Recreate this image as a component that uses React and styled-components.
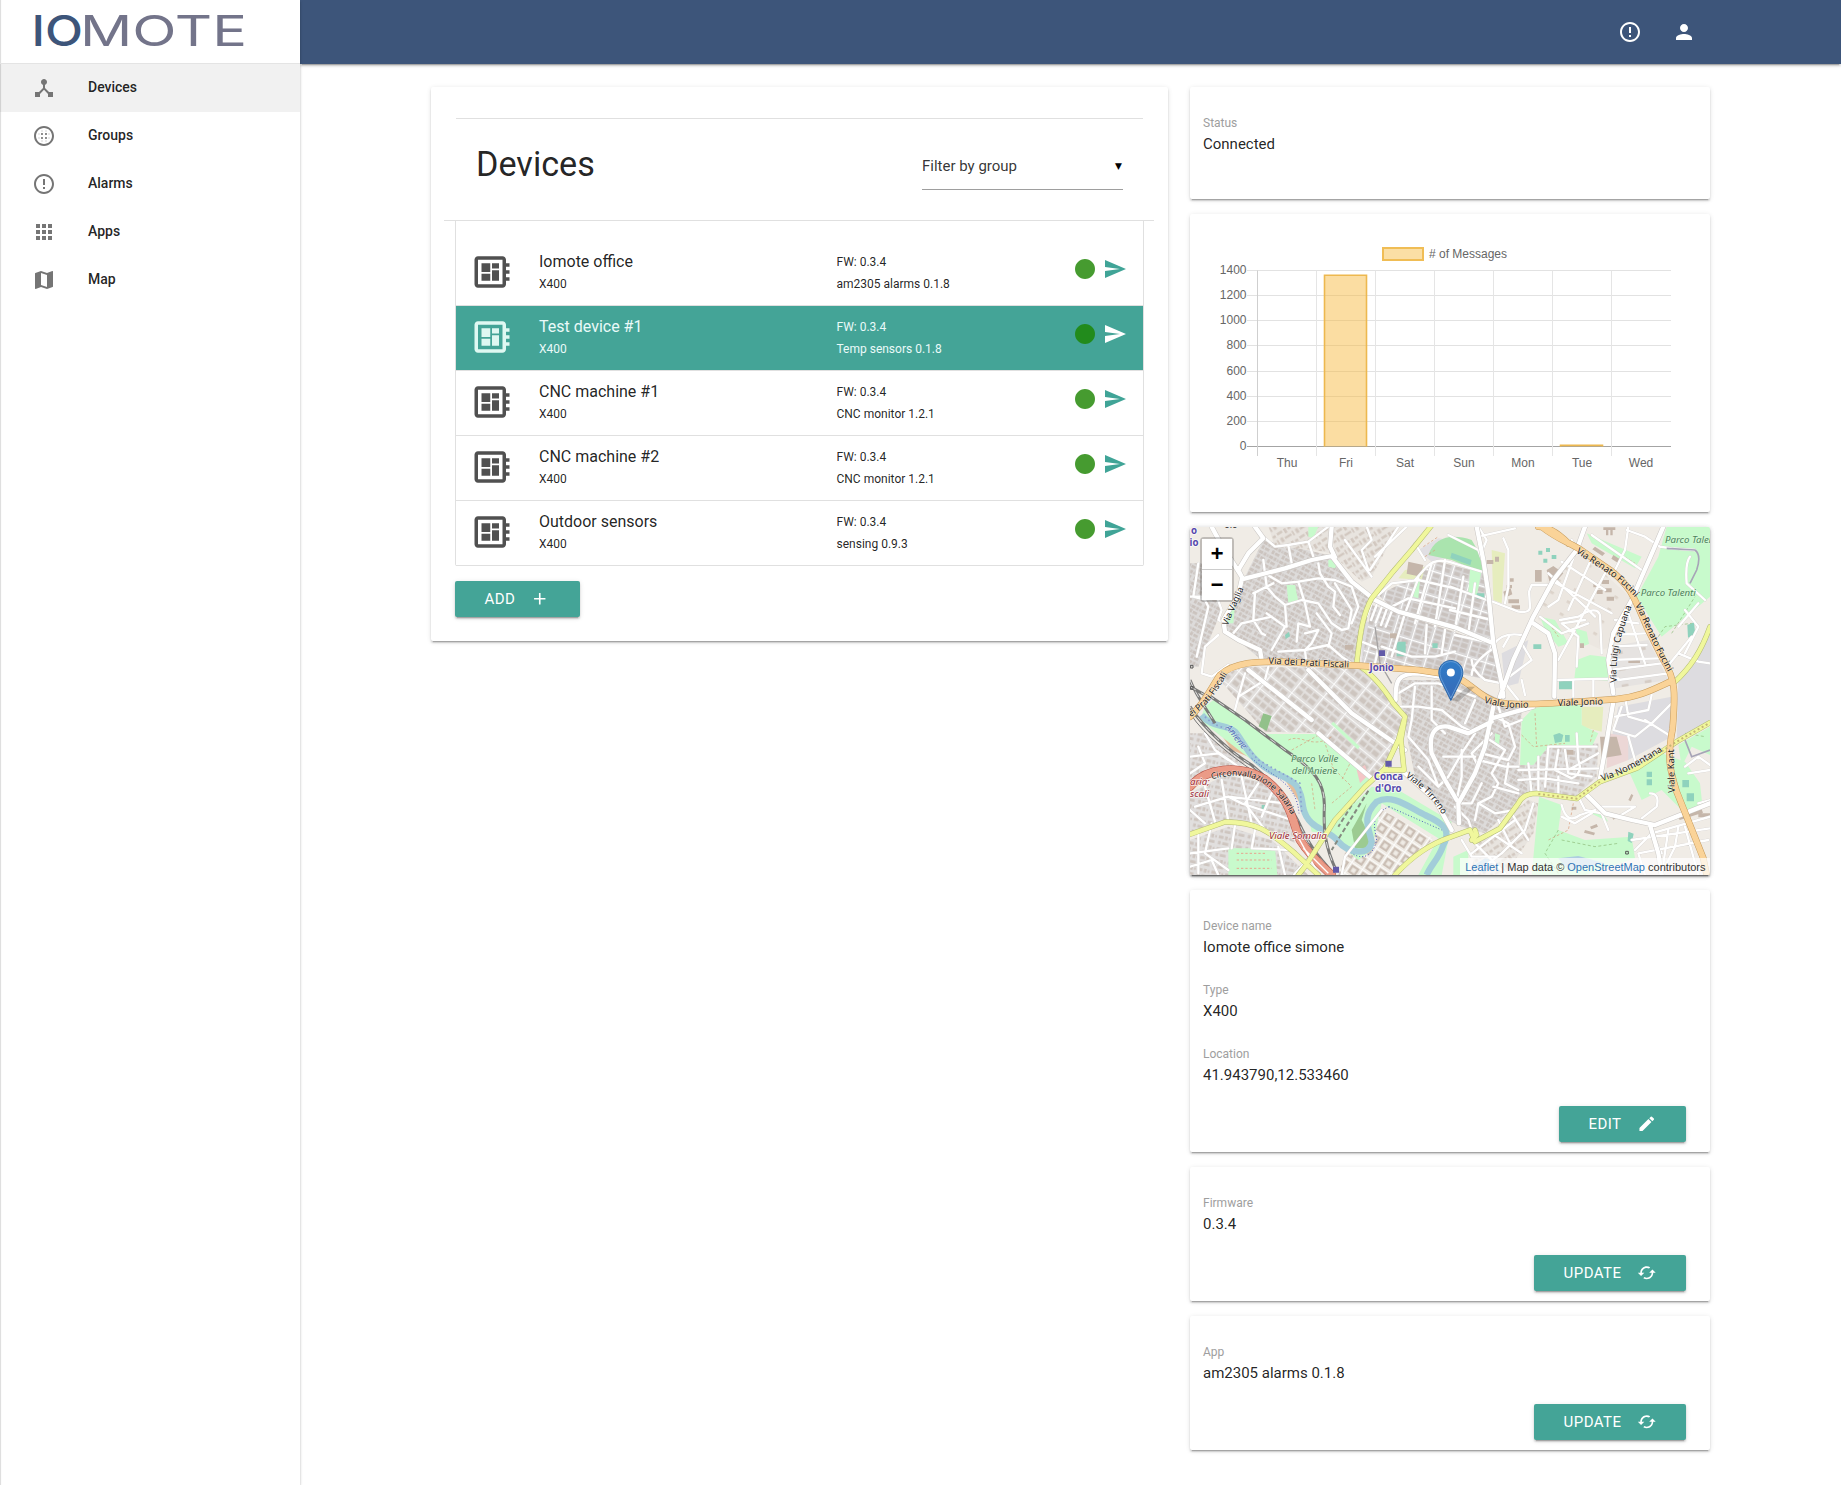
import React from "react";
import styled, { createGlobalStyle, css } from "styled-components";
import {
  MdDeviceHub, MdBlurCircular, MdErrorOutline, MdApps, MdMap, MdPerson,
  MdSend, MdDeveloperBoard, MdAdd, MdEdit, MdCached, MdLens,
} from "react-icons/md";

const GlobalStyle = createGlobalStyle`
  *, *::before, *::after { box-sizing: border-box; }
  body { margin: 0; background: #fff; font-family: Roboto, sans-serif; font-size: 15px; color: rgba(0,0,0,.87); }
`;

const depth = css`
  box-shadow: 0 2px 2px 0 rgba(0,0,0,.14), 0 1px 5px 0 rgba(0,0,0,.12), 0 3px 1px -2px rgba(0,0,0,.2);
`;

const Page = styled.div`
  display: flex;
  min-height: 1485px;
`;
const Sidebar = styled.aside`
  position: relative;
  z-index: 1;
  flex: 0 0 300px;
  background: #fff;
  box-shadow: 0 2px 2px 0 rgba(0,0,0,.14), 0 1px 3px 0 rgba(0,0,0,.16), inset 2px 0 1px -1px rgba(0,0,0,.14);
`;
const Brand = styled.div`
  height: 64px;
  padding: 8px 0 0 30px;
  border-bottom: 1px solid #e4e4e4;
  svg { display: block; }
`;
const NavItem = styled.a`
  display: flex;
  align-items: center;
  height: 48px;
  padding-left: 32px;
  gap: 32px;
  font-size: 14px;
  font-weight: 500;
  line-height: 46px;
  background: ${(p) => (p.$active ? "rgba(0,0,0,.055)" : "transparent")};
  svg { width: 24px; height: 24px; color: #757575; }
  span { margin-top: -2px; }
`;
const Main = styled.main`
  flex: 1;
  min-width: 0;
`;
const TopBar = styled.header`
  display: flex;
  align-items: center;
  justify-content: flex-end;
  gap: 30px;
  height: 64px;
  padding-right: 145px;
  background: #3d557a;
  color: #fff;
  ${depth}
  svg { width: 24px; height: 24px; }
`;
const Content = styled.div`
  display: flex;
  align-items: flex-start;
  gap: 22px;
  padding: 23px 131px 0;
`;
const Card = styled.section`
  background: #fff;
  border-radius: 2px;
  ${depth}
`;
const DevicesCard = styled(Card)`
  flex: 0 0 737px;
  padding: 31px 24px 24px;
`;
const DetailColumn = styled.div`
  flex: 0 0 520px;
  display: flex;
  flex-direction: column;
  gap: 15px;
`;
const ListHeader = styled.div`
  display: flex;
  justify-content: space-between;
  height: 102px;
  margin: 0 1px;
  padding: 26px 20px 0;
  border-top: 1px solid #e0e0e0;
`;
const Title = styled.h4`
  margin: 0;
  font-size: 34.2px;
  line-height: 38px;
  font-weight: 400;
`;
const Select = styled.div`
  display: flex;
  align-items: center;
  justify-content: space-between;
  width: 201px;
  height: 46px;
  margin-top: -1px;
  padding-bottom: 2px;
  font-size: 15px;
  color: rgba(0,0,0,.8);
  border-bottom: 1px solid #9e9e9e;
  i { font: normal 9px "DejaVu Sans", sans-serif; color: #000; margin-right: 1px; }
`;
const Divider = styled.div`
  height: 1px;
  margin: 0 -10px 0 -11px;
  background: #e0e0e0;
`;
const DeviceList = styled.ul`
  list-style: none;
  margin: 0;
  padding: 20px 0 0;
  border: solid #e0e0e0;
  border-width: 0 1px;
  border-radius: 0 0 2px 2px;
`;
const DeviceRow = styled.li`
  display: grid;
  grid-template-columns: 42px 297px 237px 24px 24px;
  column-gap: 0;
  height: 65px;
  padding-left: 15px;
  border-bottom: 1px solid #e0e0e0;
  background: ${(p) => (p.$selected ? "#44a497" : "#fff")};
  color: ${(p) => (p.$selected ? "#eafaf9" : "inherit")};
`;
const BoardIcon = styled(MdDeveloperBoard)`
  width: 42px;
  height: 42px;
  margin-top: 10px;
  color: ${(p) => (p.$selected ? "#dff8f2" : "#505050")};
`;
const NameCell = styled.div`
  padding: 9px 0 0 26px;
  font-size: 16px;
  line-height: 24px;
  small { display: block; font-size: 12px; line-height: 20px; }
`;
const VersionCell = styled.div`
  padding: 10px 0 0 26.5px;
  font-size: 12px;
  line-height: 22px;
`;
const RowIcon = styled.span`
  height: 24px;
  margin-top: 16px;
  margin-left: ${(p) => p.$offset}px;
  color: ${(p) => p.$color};
  svg { display: block; width: 24px; height: 24px; }
`;
const Button = styled.button`
  display: inline-flex;
  align-items: center;
  gap: 15px;
  height: 36px;
  padding: 0 30px 0 29.5px;
  border: 0;
  border-radius: 2px;
  background: #44a497;
  color: #fff;
  font: 400 15px Roboto, sans-serif;
  letter-spacing: .45px;
  ${depth}
  svg { width: 19.5px; height: 19.5px; }
`;
const AddButton = styled(Button)`
  display: flex;
  margin-top: 15px;
`;
const InfoCard = styled(Card)`
  min-height: 112px;
  padding: 27px 24px 10px 13px;
`;
const Field = styled.div`
  & + & { margin-top: 22px; }
  label { display: block; font-size: 12px; line-height: 18px; color: #9e9e9e; }
  div { line-height: 24px; }
`;
const CardAction = styled.div`
  display: flex;
  justify-content: flex-end;
  margin-top: 19px;
`;
const ChartCard = styled(Card)`
  height: 298px;
  svg { display: block; }
`;
const MapCard = styled(Card)`
  position: relative;
  height: 348px;
  overflow: hidden;
  svg { display: block; }
`;
const MapFrame = styled.div`
  border-radius: 2px;
  ${depth}
`;
const ZoomControl = styled.div`
  position: absolute;
  left: 10px;
  top: 10px;
  border: 2px solid rgba(0,0,0,.2);
  border-radius: 4px;
  background-clip: padding-box;
`;
const ZoomButton = styled.a`
  display: block;
  width: 30px;
  height: 30px;
  background: #fff;
  text-align: center;
  padding-top: 2px;
  font: bold 22px/30px "Liberation Mono", monospace;
  color: #000;
  & + & { height: 31px; border-top: 1px solid #ccc; }
`;
const Attribution = styled.div`
  position: absolute;
  right: 0;
  bottom: 0;
  padding: 0 4.5px 0 5px;
  height: 17px;
  font: 11px/18px "Liberation Sans", sans-serif;
  color: #333;
  background: rgba(255,255,255,.7);
  white-space: nowrap;
  a { color: #2f74b5; }
`;

function Logo() {
  return (
    <svg width="220" height="48" viewBox="30 8 220 48" fontFamily="Inter, sans-serif" fontSize="42.5" fontWeight="400">
      <text x="31.5" y="45.5" fill="#3d557a" fontWeight="500" textLength="51.500" lengthAdjust="spacingAndGlyphs">IO</text>
      <text x="80" y="45.5" fill="#73748a" textLength="167" lengthAdjust="spacingAndGlyphs">MOTE</text>
    </svg>
  );
}

const DAYS = ["Thu", "Fri", "Sat", "Sun", "Mon", "Tue", "Wed"];
const MESSAGES = [0, 1360, 0, 0, 0, 8, 0];

function MessagesChart() {
  const left = 67.5, top = 56.5, bottom = 232.5, step = 59;
  const y = (v) => bottom - (v / 1400) * (bottom - top);
  return (
    <svg width="520" height="298" fontFamily="Liberation Sans, Arial, sans-serif" fontSize="12" fill="#666">
      <rect x="193" y="34" width="40" height="12" fill="#fbdfa5" stroke="#f0bd55" strokeWidth="2" />
      <text x="239" y="44">{"# of Messages"}</text>
      {Array.from({ length: 8 }, (_, i) => i * 200).map((v) => {
        const gy = Math.round(y(v) - 0.5) + 0.5;
        return (
          <g key={v}>
            <line x1="57" x2="481" y1={gy} y2={gy} stroke={v ? "#e2e2e2" : "#a4a4a4"} />
            <text x="56.500" y={gy + 3.5} textAnchor="end">{v}</text>
          </g>
        );
      })}
      {DAYS.map((d, i) => (
        <g key={d}>
          <line x1={left + i * step} x2={left + i * step} y1={top} y2="242" stroke={i ? "#e5e5e5" : "#cfcfcf"} />
          <text x={left + (i + 0.5) * step} y="253" textAnchor="middle">{d}</text>
          {MESSAGES[i] > 0 && (
            <path
              d={`M${left + i * step + 8} ${bottom}V${y(MESSAGES[i]) - 0.3}h42V${bottom}`}
              fill="rgba(246,184,60,.48)" stroke="#edb84f" strokeWidth="1.6"
            />
          )}
        </g>
      ))}
    </svg>
  );
}

const HOUSING = [
  ["M15 130 60 130 110 270 40 440 15 440Z", "url(#blocksA)"],
  ["M180 170 235 60 430 105 560 240 515 430 230 420 120 330 150 240Z", "url(#blocksA)"],
  ["M250 20 430 20 435 100 390 90 270 80Z", "url(#blocksB)"],
  ["M440 20 640 20 560 170 530 185 450 110Z", "url(#blocksB)"],
  ["M580 225 690 170 760 125 895 160 925 365 640 280Z", "url(#gridA)"],
  ["M560 255 640 280 925 375 950 490 800 455 530 430Z", "url(#gridA)"],
  ["M100 475 170 440 520 445 620 530 655 600 620 700 560 775 400 640 240 635Z", "url(#gridB)"],
  ["M640 480 820 480 960 545 1010 570 1000 745 1240 675 1230 770 1170 830 1030 820 900 940 830 920 790 900 690 770 660 620Z", "url(#blocksA)"],
  ["M1000 740 1040 680 1240 670 1235 770 1170 830 1030 815Z", "url(#blocksC)"],
  ["M1090 160 1190 100 1340 235 1275 380 1250 390 1060 300Z", "url(#gridC)"],
  ["M1270 380 1390 360 1450 480 1290 505Z", "url(#gridD)"],
  ["M15 820 120 765 230 785 300 850 330 970 250 930 130 905 15 940Z", "url(#blocksC)"],
  ["M15 960 130 920 260 960 370 1065 15 1065Z", "url(#blocksC)"],
  ["M480 1000 590 870 745 955 640 1065 460 1065Z", "url(#gridE)"],
  ["M870 970 1030 840 1060 850 1045 940 960 1065 860 1065Z", "url(#blocksB)"],
  ["M15 640 60 640 180 730 90 770 15 780Z", "url(#blocksC)"],
];

const GREENS = [
  "M1445 20 1575 20 1575 230 1430 350 1355 230 1420 110Z",
  "M1175 420 1215 405 1270 412 1270 482 1168 475Z",
  "M1045 565 1190 540 1190 615 1240 640 1220 680 1090 680 1045 735 1005 735 1010 600Z",
  "M85 540 240 642 400 642 560 785 440 940 380 935 350 810 200 720 45 600 60 560Z",
  "M1062 830 1130 855 1120 930 1200 960 1340 950 1350 1015 1200 1065 1040 1065 1050 960Z",
  "M1330 750 1430 700 1500 725 1545 790 1552 855 1495 875 1430 810 1370 840Z",
  "M1480 675 1575 620 1575 705 1520 680 1490 740Z",
  "M130 985 270 985 277 1065 130 1065Z",
  "M560 800 640 810 800 905 790 960 770 1065 700 1065 760 955 590 850 560 990 520 1020 420 940Z",
  "M1065 290 1110 300 1150 370 1120 380 1080 330Z",
  "M370 20 400 20 385 55 370 50Z M430 120 460 120 450 145 430 140Z",
  "M855 150 890 150 875 230 850 220Z M690 180 705 180 700 235 685 230Z",
  "M1205 40 1370 110 1350 145 1220 70Z M305 195 330 195 340 245 310 250Z",
  "M805 1010 850 990 850 1065 805 1065Z M135 255 150 255 145 310 125 310Z",
  "M445 605 525 680 518 688 438 612Z M1215 870 1260 890 1270 905 1222 882Z",
  "M930 640 945 645 942 675 930 670Z M1170 325 1205 335 1212 372 1190 380Z",
];

const MINOR = [
  "M235 50 270 80 310 75 370 65 430 20", "M370 65 385 110", "M310 75 320 130", "M235 120 240 160 290 190 340 185 400 175 450 180 500 200 520 260 500 310",
  "M240 160 245 200 270 230 300 255 350 240 400 250 440 310 470 330 490 325 500 270 450 190", "M210 220 205 300 230 340 240 345", "M205 220 265 190",
  "M340 185 360 250 375 320 340 310 335 365", "M400 130 405 160 430 200 450 215 445 260 465 285", "M145 340 170 310 260 290", "M245 280 300 320 260 390",
  "M300 255 305 320", "M360 340 400 330 380 370 360 390 430 375 470 410 500 430", "M395 280 440 340 430 380", "M280 395 360 390 365 440",
  "M40 130 25 230 60 240 70 260 35 410", "M15 230 60 230 90 215 110 270 100 300 120 310", "M100 345 60 380 50 460 80 470 130 435",
  "M545 20 560 60 530 90 550 150", "M480 60 560 170", "M640 20 555 150", "M690 70 720 120", "M665 20 570 110", "M690 180 725 140Q750 115 790 125L890 155",
  "M580 225 620 190 700 180 810 205", "M620 260 670 235 810 265", "M700 175 660 280", "M740 130 690 310", "M780 120 750 320", "M590 380 680 410 750 410 810 395",
  "M660 280 620 410", "M725 315 720 400", "M780 330 770 400", "M530 365 580 385 570 430", "M810 345 900 365",
  "M560 250 545 290M575 255 558 300M590 262 572 308M605 268 588 315M620 275 602 320",
  "M795 200 905 240", "M795 270 920 300", "M835 170 810 330", "M870 190 850 340", "M890 95 905 60 880 20", "M790 45 880 90 895 130",
  "M880 50 990 25", "M955 55 970 90 970 200 960 250", "M910 240 1000 275Q1035 280 1035 260L1032 215 1040 195 1090 195", "M925 375Q950 335 1010 345", "M955 380 975 345", "M860 465Q860 430 925 385", "M860 420Q860 450 900 480L950 490",
  "M960 480 1040 420 1010 370", "M960 490 1000 540", "M1010 480 1020 525",
  "M1105 185 1280 280", "M1090 160 1200 260 1230 290", "M1130 125 1260 210", "M1170 100 1120 240 1090 260", "M1220 115 1150 270", "M1260 160 1180 310 1120 420",
  "M1125 300 1180 290Q1235 255 1245 285L1250 400", "M1200 300 1130 310 1180 350 1175 440", "M1065 290 1130 340 1210 310", "M1160 60 1180 100", "M1325 30 1380 50 1425 80",
  "M1220 45 1370 150", "M1330 20 1320 90 1290 150", "M1290 300 1360 310", "M1280 345 1380 340", "M1275 380 1385 375", "M1270 420 1420 415", "M1275 450 1430 430", "M1300 480 1450 460", "M1330 280 1380 430",
  "M1425 80 1460 85 1530 90", "M1515 110Q1500 130 1505 190L1560 240", "M1500 270 1540 320 1500 400", "M1540 250 1480 320", "M1455 430 1520 350", "M1480 400 1540 425 1575 430",
  "M1110 480 1300 475", "M1165 480 1165 530", "M1225 480 1225 530", "M1270 475 1285 520",
  "M180 460 160 530 150 570", "M250 440 240 480 160 530",
  "M640 520 690 490 760 490 870 530", "M640 560 700 560 770 570 830 620 870 640", "M690 500 680 600 670 650 730 720 760 800", "M740 500 740 600 780 640", "M870 640 830 700 790 770 760 800 700 740",
  "M870 540 840 610", "M830 690 830 770 815 840",
  "M930 590 970 610 990 680 970 720 890 700", "M900 650 960 690 920 760 940 790 920 830 880 850 870 900", "M880 720 960 740 1000 740", "M890 790 860 850 820 850", "M970 730 960 790 1000 810", "M940 560 960 620 1010 600", "M925 800 1000 820", "M810 860 850 900 860 930", "M880 850 930 880 990 870", "M920 640 860 700 880 740", "M775 710 870 710",
  "M1000 750 1250 745", "M1000 780 1080 775 1180 790", "M1030 730 1040 820", "M1090 680 1080 800", "M1120 690 1110 750 1160 775Q1195 760 1180 720L1175 640", "M1060 710 1060 820", "M1150 750 1240 700", "M1095 680 1235 680", "M1140 690 1150 760 1220 770", "M1120 770 1120 830",
  "M1130 855Q1145 915 1185 885L1230 870", "M1180 830 1200 870 1250 880 1270 930", "M1220 880 1170 910 1130 890", "M1250 860 1350 860 1300 890",
  "M1400 610 1350 650 1285 630 1310 560", "M1320 530 1330 590 1400 610 1470 540", "M1290 590 1390 570 1400 525", "M1330 650 1350 720", "M1380 600 1460 650", "M1395 820Q1425 820 1415 860L1370 895",
  "M1350 990 1400 940 1575 890", "M1340 960 1575 925", "M1450 930 1430 1065", "M1500 920 1540 1065", "M1480 920 1470 980 1440 1040", "M1400 940 1430 1000", "M1380 1065 1360 1000 1570 960",
  "M15 710 100 700 130 720", "M15 760 60 730 40 680", "M60 640 90 690 160 740", "M110 780 130 905", "M170 770 200 910", "M30 860 130 830 300 850", "M60 800 90 905", "M220 790 180 850 240 930", "M260 820 230 890", "M15 870 60 910", "M130 830 170 850 230 870 320 900", "M80 910 60 1000 130 1050", "M15 1000 130 985", "M150 915 140 985", "M210 930 200 985 320 990 360 1040", "M15 1040 80 1020 100 1065", "M280 980 300 1065", "M40 930 40 1060",
  "M590 870 480 1010 470 1065",
  "M830 960 860 1010 930 1010", "M870 970 960 1060", "M920 940 1010 1000", "M980 880 1030 960", "M1045 850 1020 930 950 1000 870 1060", "M860 1000 990 900", "M940 900 980 980",
  "M1500 740 1540 710 1575 735", "M1510 760 1575 750", "M1540 850 1575 840",
];
const MAJOR = [
  "M80 20C110 80 140 120 170 170", "M170 178 300 145 380 120 440 108 500 185 570 240 640 275 810 322 925 370", "M440 20 435 80 450 112",
  "M170 170 160 150 190 100 235 55 210 20", "M170 180 160 225 115 300 120 335 160 360 225 390 230 420",
  "M875 20 895 120 910 220 925 370 950 490 955 530", "M1200 20 1175 90 1105 180 1045 290 985 420 945 530", "M1435 20 1405 90 1340 240 1285 340 1270 420 1285 520",
  "M1285 545 1265 665 1245 775", "M1045 310 1090 340 1110 400 1108 530", "M925 560 900 680 870 760 820 850 822 910", "M400 640 560 775", "M655 755 750 840 800 930",
  "M190 450 380 600", "M370 450 500 580 660 690", "M920 595 1045 560", "M1200 820 1260 880 1340 900 1410 915 1575 850", "M1395 915 1420 1000 1430 1065", "M330 1065 380 1010", "M632 540C630 480 640 460 700 460L800 475", "M815 840 780 780 740 700C730 640 750 615 790 620L850 640 920 605",
];
const YELLOW = [
  "M737 20 680 90 620 160 560 235C530 290 525 350 515 430", "M515 432C560 460 600 510 625 550L660 590 640 660 600 745 540 800 450 900 360 1040 340 1065",
  "M660 590 648 660 657 750 600 750", "M15 943 120 906C210 905 250 930 330 1000L400 1065", "M630 1065C680 1010 740 970 795 952L855 930 870 965 945 925 1000 850Q1015 820 1055 820L1175 836 1245 785 1355 745 1475 665 1575 608", "M1575 320C1550 390 1520 440 1465 490", "M860 960 875 945 870 930",
];
const ORANGE = [
  "M15 590C60 550 80 500 105 465C150 425 220 425 280 425L520 437 700 450 800 465C850 480 880 530 935 546C1000 560 1120 548 1290 538C1370 530 1410 505 1462 482",
  "M1070 20C1120 60 1160 70 1195 95L1275 150C1340 200 1350 240 1385 320L1435 420C1475 480 1470 530 1463 625C1445 720 1455 750 1475 815L1515 915 1555 1015 1565 1065",
  "M1060 20C1090 20 1120 40 1150 70",
];
const TRUNK = ["M15 800C60 745 160 730 240 778C320 840 320 900 345 960C370 1000 400 1030 440 1065"];
const RIVER = "M50 585C80 625 120 610 150 635 180 670 190 715 260 755 340 785 345 800 355 865 370 930 430 925 460 965 490 1000 555 1010 560 965 550 920 530 890 575 845 620 820 670 860 720 885 775 910 800 930 775 975 760 1020 740 1030 725 1065";
const RAILS = ["M15 560C60 630 140 700 200 735 290 810 310 850 340 905 370 970 390 1000 450 1065", "M70 525 180 600 300 690C390 750 420 790 418 860C415 930 420 980 455 1055", "M15 480C30 520 60 560 90 610", "M15 500 60 525"];

function Streets({ paths, width, casing, fill, edge = 3 }) {
  const d = paths.join(" ");
  return (
    <g fill="none" strokeLinejoin="round" strokeLinecap="round">
      <path d={d} stroke={casing} strokeWidth={width + edge} />
      <path d={d} stroke={fill} strokeWidth={width} />
    </g>
  );
}

const STREET_LABELS = [
  ["prati", "M250 431 490 443", "Via dei Prati Fiscali", 28],
  ["prati2", "M17 592C75 550 85 530 134 452", "ei Prati Fiscali", 27],
  ["vaglia", "M128 318C145 275 160 245 178 200", "Via Vaglia", 27],
  ["fucini1", "M1172 97C1240 145 1290 165 1350 232", "Via Renato Fucini", 28],
  ["fucini2", "M1350 255C1380 310 1395 360 1448 455", "Via Renato Fucini", 28],
  ["capuana", "M1295 488C1290 410 1305 350 1338 265", "Via Luigi Capuana", 28],
  ["jonio1", "M896 548C940 560 980 567 1040 562", "Viale Jonio", 28],
  ["jonio2", "M1118 558 1265 553", "Viale Jonio", 28],
  ["nomentana", "M1252 784C1310 765 1370 735 1445 685", "Via Nomentana", 28],
  ["kant", "M1469 818 1467 675", "Viale Kant", 28],
  ["tirreno", "M662 770C700 800 745 830 780 900", "Viale Tirreno", 27],
  ["salaria", "M80 778C200 745 275 790 328 905", "Circonvallazione Salaria", 26],
  ["aniene", "M120 625C150 650 160 690 205 710", "Aniene", 28],
];

function CityMap() {
  return (
    <svg width="520" height="348" viewBox="15 21 1560 1044" fontFamily="Noto Sans, Open Sans, sans-serif">
      <defs>
        <pattern id="blocksA" width="34" height="30" patternUnits="userSpaceOnUse" patternTransform="rotate(28)">
          <rect width="34" height="30" fill="#dddbda" />
          <path d="M2 3h13v9H2zM18 2h8v11h-8zM29 4h4v8h-4zM3 16h8v11H3zM14 18h14v8H14z" fill="#cbc3be" />
        </pattern>
        <pattern id="blocksB" width="52" height="44" patternUnits="userSpaceOnUse" patternTransform="rotate(-32)">
          <rect width="52" height="44" fill="#e8e4df" />
          <path d="M3 4h18v7H3zM26 3h8v15h-8zM39 5h10v8H39zM4 22h9v15H4zM18 26h22v7H18zM44 22h5v15h-5z" fill="#d2c8c0" />
        </pattern>
        <pattern id="blocksC" width="42" height="36" patternUnits="userSpaceOnUse" patternTransform="rotate(12)">
          <rect width="42" height="36" fill="#e1dfde" />
          <path d="M3 4h14v9H3zM22 3h8v11h-8zM34 5h5v8h-5zM4 20h8v11H4zM17 22h18v8H17z" fill="#cec5bf" />
        </pattern>
        <pattern id="gridA" width="58" height="72" patternUnits="userSpaceOnUse" patternTransform="rotate(17)">
          <rect width="58" height="72" fill="#dad8d8" />
          <path d="M6 7h20v10H6zM31 6h20v12H31zM6 23h20v9H6zM31 23h20v9H31zM6 38h20v11H6zM31 37h20v13H31zM7 55h18v11H7zM31 54h20v11H31z" fill="#c9c2be" />
          <path d="M0 0H58M0 0V72" stroke="#fff" strokeWidth="6" />
        </pattern>
        <pattern id="gridB" width="82" height="50" patternUnits="userSpaceOnUse" patternTransform="rotate(39)">
          <rect width="82" height="50" fill="#e2dfdd" />
          <path d="M7 8h17v12H7zM29 8h20v12H29zM54 8h20v12H54zM7 28h20v15H7zM32 28h17v15H32zM54 28h21v15H54z" fill="#cdc5bf" />
          <path d="M0 0H82M0 0V50" stroke="#fff" strokeWidth="5" />
        </pattern>
        <pattern id="gridE" width="38" height="38" patternUnits="userSpaceOnUse" patternTransform="rotate(34)">
          <rect width="38" height="38" fill="#efebe5" />
          <path d="M9 9h20v20H9z" fill="none" stroke="#cbbfb5" strokeWidth="7" />
          <path d="M0 0H38M0 0V38" stroke="#fff" strokeWidth="5" />
        </pattern>
        <pattern id="gridC" width="58" height="42" patternUnits="userSpaceOnUse" patternTransform="rotate(30)">
          <rect width="58" height="42" fill="#ece7e1" />
          <path d="M12 12h12v8H12z" fill="#dcd3ca" />
        </pattern>
        <pattern id="gridD" width="70" height="50" patternUnits="userSpaceOnUse" patternTransform="rotate(-10)">
          <rect width="70" height="50" fill="#e6e3e1" />
          <path d="M14 14h20v9H14z" fill="#d5ccc5" />
        </pattern>
        <linearGradient id="pin" x1="0" y1="0" x2="0" y2="1">
          <stop offset="0" stopColor="#2f7cc9" /><stop offset="1" stopColor="#3769b5" />
        </linearGradient>
        {STREET_LABELS.map(([id, d]) => <path key={id} id={id} d={d} />)}
      </defs>
      <rect x="15" y="21" width="1560" height="1044" fill="#f0ece6" />
      <path d="M1480 480 1575 340 1575 610 1475 665ZM1300 560 1460 530 1460 650 1330 720 1270 700ZM950 400 1030 360 1000 490 960 500ZM530 300 600 320 610 400 530 425Z" fill="#dddce0" />
      {HOUSING.map(([d, fill]) => <path key={d} d={d} fill={fill} />)}
      <path d="M700 90 760 55 800 60 790 110 740 125Z" fill="#e1dfe3" />
      <path d="M730 105C750 50 800 40 860 60L895 120 895 160 800 120Z" fill="#aae4ae" />
      <path d="M1270 640 1330 650 1330 720 1265 745Z" fill="#ecd7d6" />
      <path d="M95 625 130 635 190 710 140 690ZM375 790 405 820 400 875 370 860ZM300 780 350 800 345 850Z" fill="#e5bd9b" />
      <path d="M660 150 720 140 710 180 640 175ZM920 90 960 100 950 250 925 240ZM1190 560 1255 560 1250 635 1190 620Z" fill="#e6edbe" />
      {GREENS.map((d) => <path key={d} d={d} fill="#c8facc" />)}
      <path d="M500 930 545 850 530 900 560 960 545 985 510 985Z" fill="#9ccb91" />
      <path d="M515 750 540 735 550 765 525 790Z" fill="#f4c6c7" />
      <path d="M155 1000H240M155 1020H260M155 1045H260" stroke="#e6a58e" strokeWidth="3" strokeDasharray="7 6" />
      <g fill="#8fd2bd">
        <path d="M635 365h27v44h-27zM1122 480h45v28h-45zM1045 373h24v14h-24zM1507 315l20-8 4 38-22 8zM800 98l60 22-4 16-60-22zM1105 645l18-6 12 6-5 20-20 4zM1140 645h14v20h-14zM1385 755h16v16h-16zM1385 778h16v18h-16zM1492 780h20v22h-20zM1505 820h22v24h-22zM875 220h23v16h-23zM300 345l12-10 3 14-13 8zM742 370h16v14h-16zM230 855h14v14h-14zM1330 935l16 6-6 28-12-6z" />
        <path d="M1060 92h12v12h-12zM1083 84h12v12h-12zM1075 116h12v12h-12zM1100 105h14v12h-14z" />
      </g>
      <path d="M235 580l25 8-15 45-24-14z" fill="#92c18a" />
      <g fill="#c5b6aa">
        <path d="M670 125l45 10-8 35-42-9zM1050 150h20v35h-20zM955 215l22-10 5 18-22 10zM1085 150l20-12 30 22-22 25-20-2zM1245 650h50l15 55-60 10zM480 375h25v14h-25zM615 340h22v15h-22zM1330 415h35v14h-35zM1140 690h25v14h-25zM1230 80l30 20-8 8-30-20zM1285 105l22 14-8 10-20-13zM1540 880h35v12h-35zM1480 890l70-22 4 10-70 22z" />
        <path d="M970 175h16v10h-16zM965 195h16v10h-16zM970 238h32v12h-32zM980 256h25v12h-25zM1225 190h20v12h-20zM1250 180h22v12h-22zM1235 210h18v12h-18zM1260 205h20v12h-20zM1265 230h22v12h-22zM905 120h20v12h-20zM930 110h12v15h-12z" />
        <path d="M1255 22h36v8h-8v16h-7v-16h-6v16h-7v-16h-8zM1185 370h12v14h-12zM1160 860h14v9h-14zM1200 930l30 8-3 8-30-8zM1280 890l14-8 5 8-14 9zM1330 840l9-18 6 4-8 18zM1215 920l20-8 4 8-20 8z" />
      </g>
      <g fill="none" strokeDasharray="8 6" stroke="#d89b78" strokeWidth="2">
        <path d="M310 660C350 640 380 690 440 650M320 690 410 640 450 760M440 740 500 800 440 850M380 790 390 870M500 720 470 780M715 80 760 50M720 110 750 90" />
        <path d="M1050 580 1055 680M1010 645 1045 680 1140 670M1225 630 1215 670M1165 850 1150 930 1090 960M1085 300 1120 350M1215 45 1350 130" />
      </g>
      <path d="M1460 340 1530 230M1420 350 1440 320 1520 310M1120 930 1080 1000 1120 1060M1130 960 1230 980 1300 970M1500 640 1560 650" fill="none" stroke="#8cb977" strokeWidth="2" strokeDasharray="9 7" />
      <path d="M860 1040 900 1015 930 1020 900 1060ZM1120 1015 1180 1008 1260 1030 1150 1050Z" fill="#aecde0" />
      <path d={RIVER} fill="none" stroke="#a2cdd9" strokeWidth="19" />
      <path d="M60 590C90 625 130 620 155 645L220 720 345 790 350 880" fill="none" stroke="#8aa0d0" strokeWidth="5" strokeDasharray="5 9" />
      <path d="M200 715C270 775 335 790 342 880M612 860C570 880 560 900 575 955 570 1000 540 1025 500 1000M612 860 770 930" fill="none" stroke="#4e5cc0" strokeWidth="3" strokeDasharray="3 6" />
      <Streets paths={MINOR} width={7} casing="#d2cfcd" fill="#fff" edge={1.5} />
      <g fill="none">
        <path d={RAILS.join(" ")} stroke="#7a7a78" strokeWidth="9" />
        <path d={RAILS.join(" ")} stroke="#dedede" strokeWidth="3" strokeDasharray="20 18" />
        <path d="M15 580C60 650 150 715 200 750L290 825 330 905" stroke="#777" strokeWidth="3" />
        <path d="M570 320 585 430 620 490" stroke="#a5a3a3" strokeWidth="4" />
        <path d="M535 800 460 920M550 812 440 990" stroke="#858a80" strokeWidth="6" strokeDasharray="14 8" />
        <path d="M1445 85 1530 90Q1550 105 1535 150L1515 190M1500 660 1520 710 1575 690" stroke="#a7a4b7" strokeWidth="5" />
      </g>
      <Streets paths={MAJOR} width={13} casing="#c9c6c3" fill="#fff" />
      <Streets paths={TRUNK} width={23} casing="#b65246" fill="#eb9b87" />
      <path d="M330 935 400 1060M355 985 430 1060" stroke="#fff" strokeWidth="4" fill="none" />
      <Streets paths={YELLOW} width={13} casing="#b3bb74" fill="#f0f79c" />
      <Streets paths={ORANGE} width={17} casing="#c4995a" fill="#fad398" />
      <path d="M1060 822 1175 836 1245 785M1430 694 1475 665 1575 608" fill="none" stroke="#c4b676" strokeWidth="6" strokeDasharray="6 8" />
      <g fill="#625aa8">
        <path d="M582 391h18v17h-18zM601 722h19v18h-19zM444 1040h18v18h-18z" />
      </g>
      <g fill="none" stroke="#555" strokeWidth="3"><path d="M16 436h8v8h-8zM16 500h8v8h-8zM1322 994h8v8h-8z" /></g>
      {STREET_LABELS.map(([id, , label, size]) => (
        <text key={id} fontSize={size} fill={id === "aniene" ? "#5471b6" : "#222"} fontStyle={id === "aniene" ? "italic" : "normal"}
          stroke="rgba(255,255,255,.45)" strokeWidth="3" paintOrder="stroke">
          <textPath href={`#${id}`}>{label}</textPath>
        </text>
      ))}
      <g fontWeight="700" fontSize="29" fill="#5648ad" stroke="#fff" strokeOpacity=".75" strokeWidth="5" paintOrder="stroke" textAnchor="middle">
        <text x="590" y="452">Jonio</text>
        <text x="610" y="781">Conca</text>
        <text x="610" y="816">{"d'Oro"}</text>
        <text x="27" y="43">o</text>
        <text x="27" y="79">io</text>
      </g>
      <g fontStyle="italic" fontSize="29" fill="#4c835a" stroke="#d8f9da" strokeWidth="3" paintOrder="stroke">
        <text x="1440" y="70">Parco Talenti</text>
        <text x="1367" y="229">Parco Talenti</text>
        <text x="318" y="727">Parco Valle</text>
        <text x="320" y="763">{"dell'Aniene"}</text>
      </g>
      <g fontStyle="italic" fontSize="29" fill="#9c2630" stroke="#fff" strokeOpacity=".8" strokeWidth="4" paintOrder="stroke">
        <text x="252" y="957">Viale Somalia</text>
        <text x="15" y="796">aria;</text>
        <text x="15" y="832">scali</text>
      </g>
      <text x="118" y="25" fontSize="27" fill="#222">oio</text>
      <path d="M800 540 848 500 870 500 820 545Z" fill="#222" opacity=".22" />
      <g transform="translate(760 420) scale(3)">
        <path d="M12.500 .5C5.900 .5.500 5.900.500 12.500c0 3.100 1 6 2.500 9L12.500 40.500 22 21.500c1.500-3 2.500-5.900 2.500-9C24.500 5.900 19.100.500 12.500.500Z" fill="url(#pin)" stroke="#2a66a9" />
        <path d="M12.500 1.600C6.500 1.600 1.600 6.500 1.600 12.500c0 2.800.9 5.500 2.400 8.500L12.500 38 21 21c1.500-3 2.400-5.700 2.400-8.500 0-6-4.900-10.900-10.900-10.900Z" fill="none" stroke="#6ea5dc" strokeWidth=".8" />
        <circle cx="12.500" cy="12.600" r="4" fill="#fff" />
      </g>
    </svg>
  );
}

const NAV = [
  ["Devices", MdDeviceHub], ["Groups", MdBlurCircular], ["Alarms", MdErrorOutline], ["Apps", MdApps], ["Map", MdMap],
];
const DEVICES = [
  ["Iomote office", "am2305 alarms 0.1.8"],
  ["Test device #1", "Temp sensors 0.1.8"],
  ["CNC machine #1", "CNC monitor 1.2.1"],
  ["CNC machine #2", "CNC monitor 1.2.1"],
  ["Outdoor sensors", "sensing 0.9.3"],
];

function Info({ label, children }) {
  return <Field><label>{label}</label><div>{children}</div></Field>;
}

export default function App() {
  return (
    <Page>
      <GlobalStyle />
      <Sidebar>
        <Brand><Logo /></Brand>
        {NAV.map(([label, Icon], i) => (
          <NavItem key={label} $active={i === 0}><Icon /><span>{label}</span></NavItem>
        ))}
      </Sidebar>
      <Main>
        <TopBar><MdErrorOutline /><MdPerson /></TopBar>
        <Content>
          <DevicesCard>
            <ListHeader>
              <Title>Devices</Title>
              <Select>Filter by group<i>▼</i></Select>
            </ListHeader>
            <Divider />
            <DeviceList>
              {DEVICES.map(([name, app], i) => {
                const selected = i === 1;
                return (
                  <DeviceRow key={name} $selected={selected}>
                    <BoardIcon $selected={selected} />
                    <NameCell>{name}<small>X400</small></NameCell>
                    <VersionCell>FW: 0.3.4<br />{app}</VersionCell>
                    <RowIcon $offset={26} $color={selected ? "#228b1c" : "#469b30"}><MdLens /></RowIcon>
                    <RowIcon $offset={32} $color={selected ? "#fff" : "#40a497"}><MdSend /></RowIcon>
                  </DeviceRow>
                );
              })}
            </DeviceList>
            <AddButton>ADD<MdAdd /></AddButton>
          </DevicesCard>
          <DetailColumn>
            <InfoCard><Info label="Status">Connected</Info></InfoCard>
            <ChartCard><MessagesChart /></ChartCard>
            <MapFrame>
              <MapCard>
                <CityMap />
                <ZoomControl><ZoomButton>+</ZoomButton><ZoomButton>−</ZoomButton></ZoomControl>
                <Attribution><a>Leaflet</a> | Map data © <a>OpenStreetMap</a> contributors</Attribution>
              </MapCard>
            </MapFrame>
            <InfoCard>
              <Info label="Device name">Iomote office simone</Info>
              <Info label="Type">X400</Info>
              <Info label="Location">41.943790,12.533460</Info>
              <CardAction><Button>EDIT<MdEdit /></Button></CardAction>
            </InfoCard>
            <InfoCard>
              <Info label="Firmware">0.3.4</Info>
              <CardAction><Button>UPDATE<MdCached /></Button></CardAction>
            </InfoCard>
            <InfoCard>
              <Info label="App">am2305 alarms 0.1.8</Info>
              <CardAction><Button>UPDATE<MdCached /></Button></CardAction>
            </InfoCard>
          </DetailColumn>
        </Content>
      </Main>
    </Page>
  );
}
